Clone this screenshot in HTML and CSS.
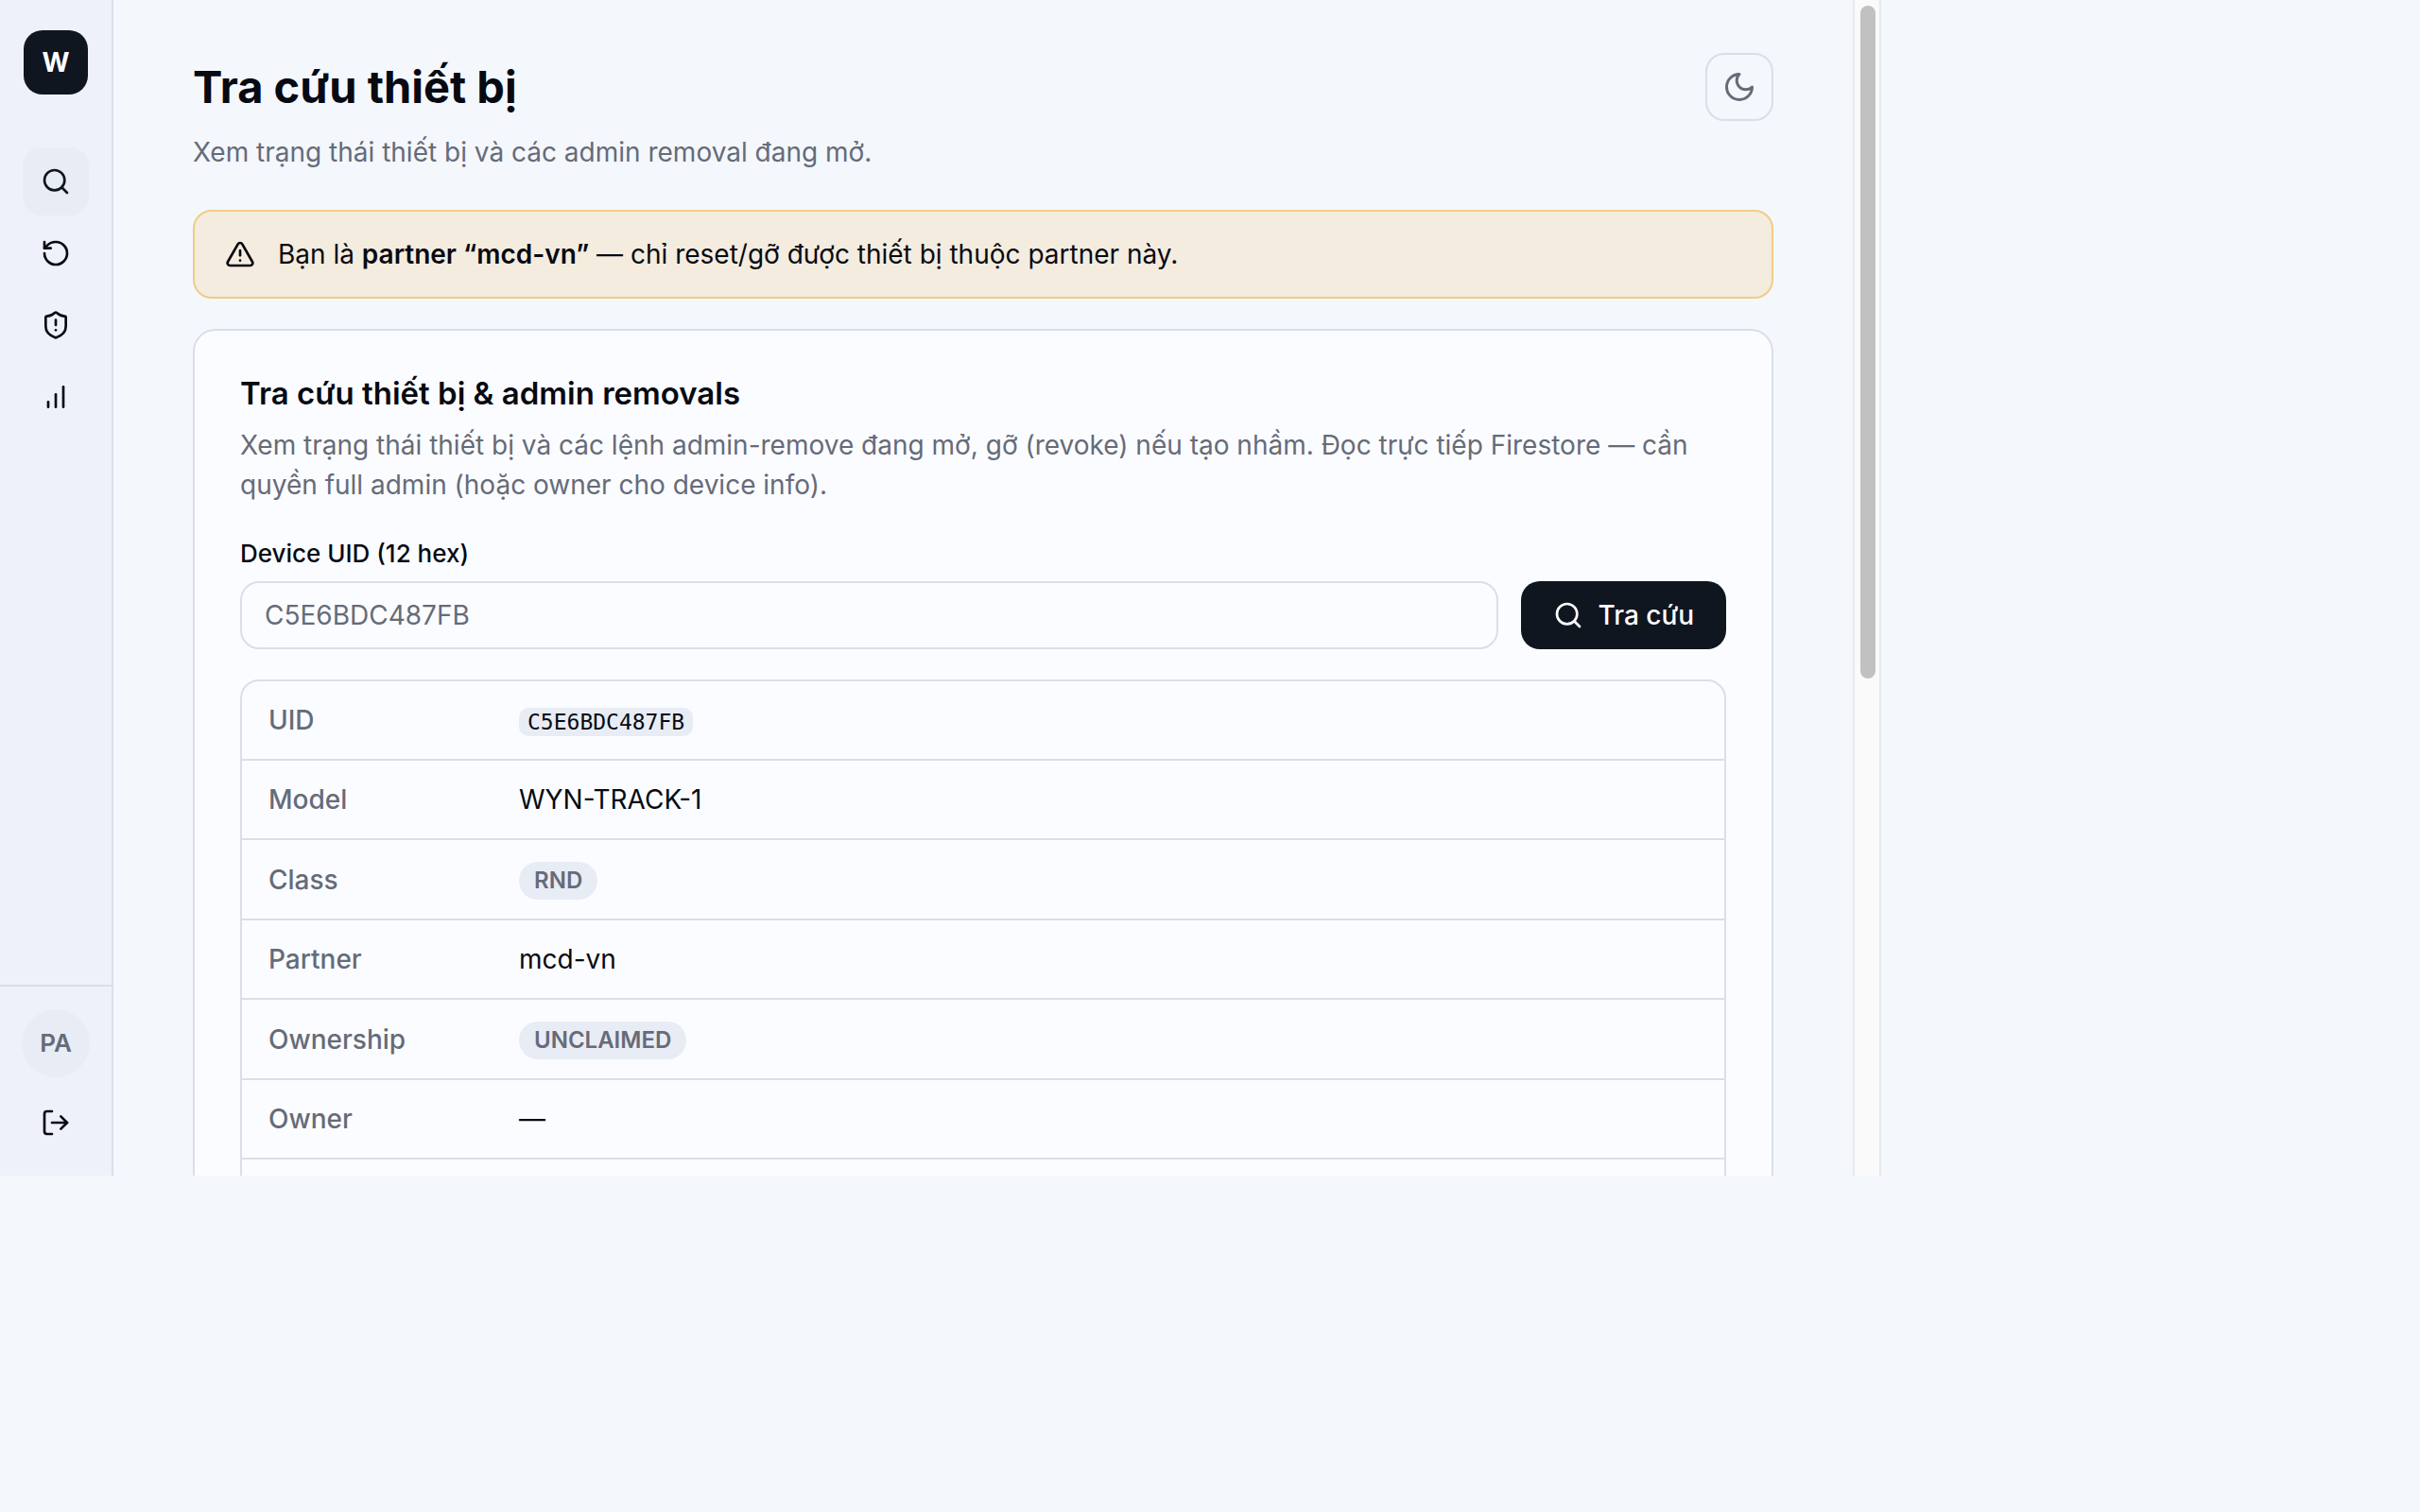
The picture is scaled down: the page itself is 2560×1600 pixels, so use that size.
FILE: index.html
```html
<!DOCTYPE html>
<html lang="vi">
<head>
    <meta charset="UTF-8">
    <meta name="viewport" content="width=device-width, initial-scale=1.0">
    <title>Tra cứu thiết bị</title>
    <link rel="stylesheet" href="styles.css">
</head>
<body>
    <div class="app">
        <aside class="sidebar">
            <a class="logo" href="#">W</a>
            <nav class="menu">
                <a class="menu-link active" href="#" aria-label="Tra cứu">
                    <svg class="icon" viewBox="0 0 24 24"><circle cx="11" cy="11" r="8"/><path d="m21 21-4.3-4.3"/></svg>
                </a>
                <a class="menu-link" href="#" aria-label="Reset">
                    <svg class="icon" viewBox="0 0 24 24"><path d="M3 12a9 9 0 1 0 9-9 9.75 9.75 0 0 0-6.74 2.74L3 8"/><path d="M3 3v5h5"/></svg>
                </a>
                <a class="menu-link" href="#" aria-label="Admin removal">
                    <svg class="icon" viewBox="0 0 24 24"><path d="M20 13c0 5-3.5 7.5-7.66 8.95a1 1 0 0 1-.67-.01C7.5 20.5 4 18 4 13V6a1 1 0 0 1 1-1c2 0 4.5-1.2 6.24-2.72a1.17 1.17 0 0 1 1.52 0C14.51 3.81 17 5 19 5a1 1 0 0 1 1 1z"/><path d="M12 8v4"/><path d="M12 16h.01"/></svg>
                </a>
                <a class="menu-link" href="#" aria-label="Thống kê">
                    <svg class="icon" viewBox="0 0 24 24"><path d="M12 20V10"/><path d="M18 20V4"/><path d="M6 20v-4"/></svg>
                </a>
            </nav>
            <div class="sidebar-footer">
                <div class="avatar">PA</div>
                <button class="menu-link" type="button" aria-label="Đăng xuất">
                    <svg class="icon" viewBox="0 0 24 24"><path d="M9 21H5a2 2 0 0 1-2-2V5a2 2 0 0 1 2-2h4"/><path d="m16 17 5-5-5-5"/><path d="M21 12H9"/></svg>
                </button>
            </div>
        </aside>

        <main class="content">
            <header class="page-header">
                <div>
                    <h1>Tra cứu thiết bị</h1>
                    <p class="subtitle">Xem trạng thái thiết bị và các admin removal đang mở.</p>
                </div>
                <button class="theme-button" type="button" aria-label="Đổi giao diện">
                    <svg class="icon icon-large" viewBox="0 0 24 24"><path d="M12 3a6 6 0 0 0 9 9 9 9 0 1 1-9-9Z"/></svg>
                </button>
            </header>

            <div class="alert">
                <svg class="icon" viewBox="0 0 24 24"><path d="m21.73 18-8-14a2 2 0 0 0-3.48 0l-8 14A2 2 0 0 0 4 21h16a2 2 0 0 0 1.73-3"/><path d="M12 9v4"/><path d="M12 17h.01"/></svg>
                <p>Bạn là <strong>partner “mcd-vn”</strong> — chỉ reset/gỡ được thiết bị thuộc partner này.</p>
            </div>

            <section class="card">
                <h2>Tra cứu thiết bị &amp; admin removals</h2>
                <p class="card-text">Xem trạng thái thiết bị và các lệnh admin-remove đang mở, gỡ (revoke) nếu tạo nhầm. Đọc trực tiếp Firestore — cần quyền full admin (hoặc owner cho device info).</p>
                <form class="lookup-form">
                    <label for="uid">Device UID (12 hex)</label>
                    <div class="lookup-row">
                        <input type="text" id="uid" placeholder="C5E6BDC487FB">
                        <button class="lookup-button" type="submit">
                            <svg class="icon" viewBox="0 0 24 24"><circle cx="11" cy="11" r="8"/><path d="m21 21-4.3-4.3"/></svg>
                            Tra cứu
                        </button>
                    </div>
                </form>
                <div class="table-box">
                    <table>
                        <tr><th scope="row">UID</th><td><code>C5E6BDC487FB</code></td></tr>
                        <tr><th scope="row">Model</th><td>WYN-TRACK-1</td></tr>
                        <tr><th scope="row">Class</th><td><span class="badge">RND</span></td></tr>
                        <tr><th scope="row">Partner</th><td>mcd-vn</td></tr>
                        <tr><th scope="row">Ownership</th><td><span class="badge">UNCLAIMED</span></td></tr>
                        <tr><th scope="row">Owner</th><td>—</td></tr>
                        <tr><th scope="row"></th><td></td></tr>
                    </table>
                </div>
            </section>
        </main>
        <div class="scrollbar"><div class="thumb"></div></div>
    </div>
</body>
</html>
```
FILE: styles.css
```css
* {
    box-sizing: border-box;
}
body {
    margin: 0;
    background-color: #f4f7fc;
    color: #070a12;
    font-family: Inter, "Noto Sans", sans-serif;
    font-size: 28px;
    line-height: 42px;
}
h1, h2, p {
    margin: 0;
}
button, input {
    font: inherit;
}
.app {
    display: flex;
    max-width: 1990px;
    height: 100vh;
    max-height: 1244px;
    overflow: hidden;
}
.icon {
    width: 32px;
    height: 32px;
    flex-shrink: 0;
    fill: none;
    stroke: currentColor;
    stroke-width: 2;
    stroke-linecap: round;
    stroke-linejoin: round;
}
.icon-large {
    width: 36px;
    height: 36px;
}

/* sidebar */
.sidebar {
    display: flex;
    flex-direction: column;
    align-items: center;
    width: 120px;
    flex-shrink: 0;
    padding-top: 32px;
    background-color: #eef1fa;
    border-right: 2px solid #d9dfe9;
}
.logo {
    display: flex;
    align-items: center;
    justify-content: center;
    width: 68px;
    height: 68px;
    border-radius: 20px;
    background-color: #101620;
    color: white;
    font-weight: 700;
    text-decoration: none;
}
.menu {
    display: flex;
    flex-direction: column;
    gap: 4px;
    margin-top: 56px;
}
.menu-link {
    display: flex;
    align-items: center;
    justify-content: center;
    width: 70px;
    height: 72px;
    padding: 0;
    border: none;
    border-radius: 20px;
    background: none;
    color: inherit;
}
.menu-link.active {
    background-color: #e8ecf5;
    color: #101620;
}
.sidebar-footer {
    display: flex;
    flex-direction: column;
    align-items: center;
    gap: 12px;
    width: 100%;
    margin-top: auto;
    padding: 24px 0 20px;
    border-top: 2px solid #d9dfe9;
}
.avatar {
    width: 72px;
    height: 72px;
    border-radius: 50%;
    background-color: #e8ecf5;
    color: #666b78;
    font-size: 26px;
    font-weight: 600;
    line-height: 72px;
    text-align: center;
}

/* content */
.content {
    flex: 1;
    min-width: 0;
    padding: 56px 84px 0;
    overflow: hidden;
}
.page-header {
    display: flex;
    justify-content: space-between;
    align-items: flex-start;
    margin-bottom: 40px;
}
h1 {
    font-size: 47px;
    font-weight: 700;
    line-height: 72px;
}
.subtitle {
    margin-top: 12px;
    color: #666b78;
}
.theme-button {
    display: flex;
    align-items: center;
    justify-content: center;
    width: 72px;
    height: 72px;
    padding: 0;
    border: 2px solid #d9dfe9;
    border-radius: 20px;
    background: none;
    color: #666b78;
}
.alert {
    display: flex;
    align-items: center;
    gap: 24px;
    padding: 24px 32px;
    border: 2px solid #f1cc86;
    border-radius: 20px;
    background-color: #f4ecdf;
}
.alert strong {
    font-weight: 600;
}
.card {
    margin-top: 32px;
    padding: 44px 48px;
    border: 2px solid #d9dfe9;
    border-radius: 24px;
    background-color: #fbfcff;
}
h2 {
    font-size: 33px;
    font-weight: 600;
    line-height: 44px;
}
.card-text {
    margin-top: 12px;
    color: #666b78;
}
.lookup-form {
    margin-top: 32px;
}
.lookup-form label {
    display: block;
    margin-bottom: 10px;
    font-size: 26px;
    font-weight: 500;
    line-height: 39px;
}
.lookup-row {
    display: flex;
    gap: 24px;
}
.lookup-row input {
    flex: 1;
    min-width: 0;
    height: 72px;
    padding: 0 24px;
    border: 2px solid #d9dfe9;
    border-radius: 20px;
    background: none;
    color: inherit;
}
.lookup-row input::placeholder {
    color: #666b78;
}
.lookup-button {
    display: flex;
    align-items: center;
    gap: 16px;
    height: 72px;
    padding: 0 34px;
    border: none;
    border-radius: 20px;
    background-color: #101620;
    color: white;
    font-weight: 500;
}

/* device info */
.table-box {
    margin-top: 32px;
    border: 2px solid #d9dfe9;
    border-radius: 20px;
    overflow: hidden;
}
table {
    width: 100%;
    border-spacing: 0;
}
th, td {
    padding: 20px 28px;
    border-bottom: 2px solid #d9dfe9;
    text-align: left;
}
th {
    width: 265px;
    color: #666b78;
    font-weight: 500;
}
code {
    padding: 2px 9px;
    border-radius: 10px;
    background-color: #e8ecf5;
    font-family: "DejaVu Sans Mono", monospace;
    font-size: 23px;
    line-height: 30px;
}
.badge {
    display: inline-block;
    padding: 0 16px;
    border-radius: 20px;
    background-color: #e8ecf5;
    color: #666b78;
    font-size: 24px;
    font-weight: 600;
    line-height: 40px;
}

.scrollbar {
    width: 30px;
    flex-shrink: 0;
    padding: 6px 4px 0 6px;
    border: solid #e8e8e8;
    border-width: 0 2px;
    background-color: #fafafa;
}
.thumb {
    height: 712px;
    border-radius: 8px;
    background-color: #c1c1c1;
}
```
